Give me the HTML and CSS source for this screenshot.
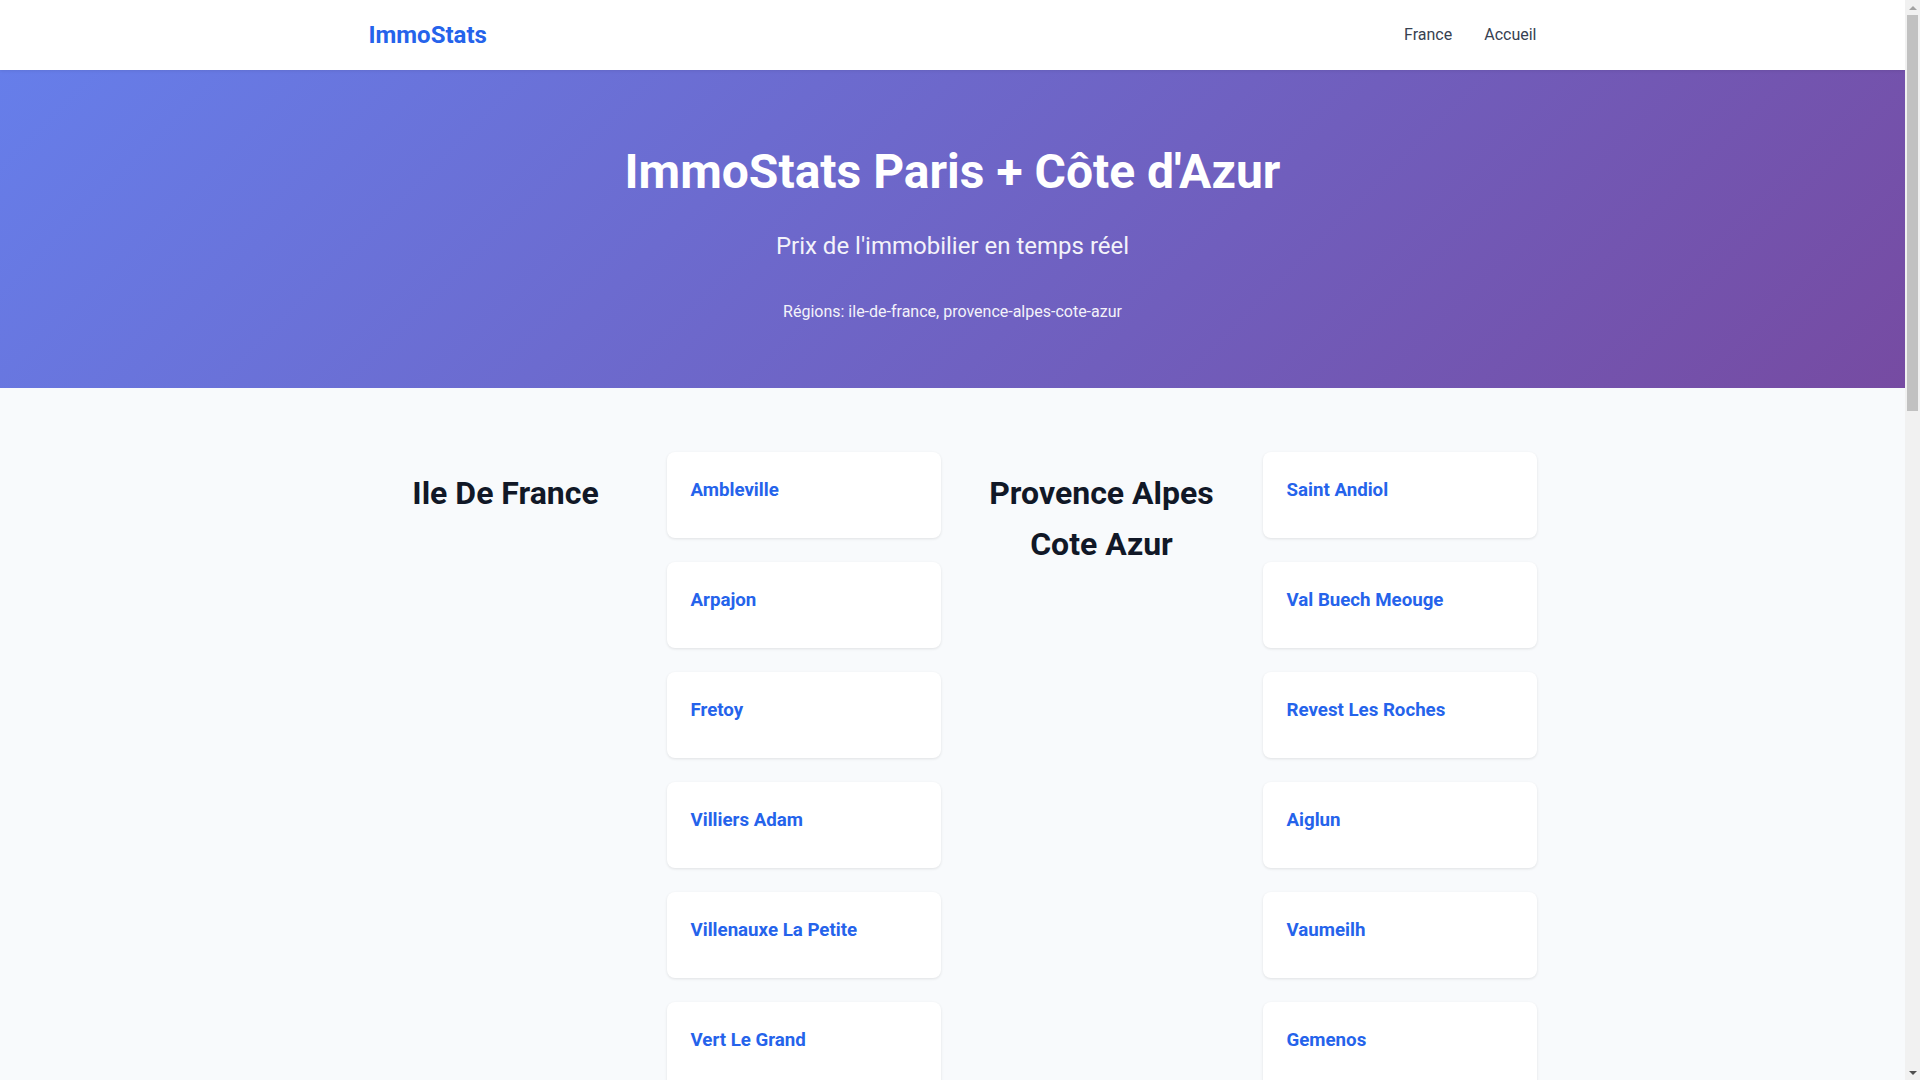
FILE: index.html
```html
<!DOCTYPE html>
<html lang="fr">
<head>
  <meta charset="UTF-8">
  <meta name="viewport" content="width=device-width, initial-scale=1.0">
  <title>ImmoStats Paris + Côte d'Azur</title>
  <link rel="stylesheet" href="styles.css">
</head>
<body>
  <header class="navbar">
    <div class="container nav-inner">
      <a class="logo" href="#">ImmoStats</a>
      <nav class="nav-links">
        <a href="#">France</a>
        <a href="#">Accueil</a>
      </nav>
    </div>
  </header>

  <section class="hero">
    <div class="container">
      <h1>ImmoStats Paris + Côte d'Azur</h1>
      <p class="subtitle">Prix de l'immobilier en temps réel</p>
      <p class="regions-line">Régions: ile-de-france, provence-alpes-cote-azur</p>
    </div>
  </section>

  <main class="cities">
    <div class="container regions">
      <!-- une région = un titre + une colonne de villes -->
      <div class="region">
        <h2>Ile De France</h2>
        <div class="city-list">
          <a class="city-card" href="#"><h3>Ambleville</h3></a>
          <a class="city-card" href="#"><h3>Arpajon</h3></a>
          <a class="city-card" href="#"><h3>Fretoy</h3></a>
          <a class="city-card" href="#"><h3>Villiers Adam</h3></a>
          <a class="city-card" href="#"><h3>Villenauxe La Petite</h3></a>
          <a class="city-card" href="#"><h3>Vert Le Grand</h3></a>
          <a class="city-card" href="#"><h3>Chevreuse</h3></a>
          <a class="city-card" href="#"><h3>Milly La Foret</h3></a>
          <a class="city-card" href="#"><h3>Houdan</h3></a>
          <a class="city-card" href="#"><h3>Provins</h3></a>
          <a class="city-card" href="#"><h3>Rambouillet</h3></a>
          <a class="city-card" href="#"><h3>Etampes</h3></a>
          <a class="city-card" href="#"><h3>Dourdan</h3></a>
          <a class="city-card" href="#"><h3>Barbizon</h3></a>
          <a class="city-card" href="#"><h3>Nemours</h3></a>
          <a class="city-card" href="#"><h3>Magny En Vexin</h3></a>
          <a class="city-card" href="#"><h3>Enghien Les Bains</h3></a>
          <a class="city-card" href="#"><h3>Saint Germain En Laye</h3></a>
          <a class="city-card" href="#"><h3>Montfort L Amaury</h3></a>
          <a class="city-card" href="#"><h3>Houilles</h3></a>
        </div>
      </div>
      <div class="region">
        <h2>Provence Alpes Cote Azur</h2>
        <div class="city-list">
          <a class="city-card" href="#"><h3>Saint Andiol</h3></a>
          <a class="city-card" href="#"><h3>Val Buech Meouge</h3></a>
          <a class="city-card" href="#"><h3>Revest Les Roches</h3></a>
          <a class="city-card" href="#"><h3>Aiglun</h3></a>
          <a class="city-card" href="#"><h3>Vaumeilh</h3></a>
          <a class="city-card" href="#"><h3>Gemenos</h3></a>
          <a class="city-card" href="#"><h3>Cassis</h3></a>
          <a class="city-card" href="#"><h3>Gordes</h3></a>
          <a class="city-card" href="#"><h3>Lourmarin</h3></a>
          <a class="city-card" href="#"><h3>Menton</h3></a>
          <a class="city-card" href="#"><h3>Grasse</h3></a>
          <a class="city-card" href="#"><h3>Sisteron</h3></a>
          <a class="city-card" href="#"><h3>Briancon</h3></a>
          <a class="city-card" href="#"><h3>Cotignac</h3></a>
          <a class="city-card" href="#"><h3>Bandol</h3></a>
          <a class="city-card" href="#"><h3>Ramatuelle</h3></a>
          <a class="city-card" href="#"><h3>Eze</h3></a>
          <a class="city-card" href="#"><h3>Bormes Les Mimosas</h3></a>
          <a class="city-card" href="#"><h3>Saint Paul De Vence</h3></a>
          <a class="city-card" href="#"><h3>Moustiers Sainte Marie</h3></a>
        </div>
      </div>
    </div>
  </main>

  <!-- barre de défilement dessinée (le navigateur headless la masque) -->
  <div class="scrollbar" aria-hidden="true">
    <span class="sb-arrow sb-up"></span>
    <span class="sb-thumb"></span>
    <span class="sb-space"></span>
    <span class="sb-arrow sb-down"></span>
  </div>
</body>
</html>
```

FILE: styles.css
```css
* {
  box-sizing: border-box;
}
html, body {
  margin: 0;
  padding: 0;
}
body {
  font-family: Roboto, "Liberation Sans", Arial, sans-serif;
  line-height: 1.6;
  color: #1f2937;
  background-color: #f8fafc;
  margin-right: 15px;
}
a {
  text-decoration: none;
}
.container {
  max-width: 1200px;
  margin: 0 auto;
  padding: 0 16px;
}

/* barre du haut */
.navbar {
  background-color: #fff;
  padding: 16px 0;
  box-shadow: 0 1px 3px rgba(0, 0, 0, 0.08);
  position: relative;
  z-index: 1;
}
.nav-inner {
  display: flex;
  align-items: center;
  justify-content: space-between;
}
.logo {
  font-size: 24px;
  font-weight: 700;
  color: #2563eb;
}
.nav-links {
  display: flex;
  gap: 32px;
}
.nav-links a {
  color: #374151;
  font-size: 16px;
}

/* bandeau dégradé */
.hero {
  background: linear-gradient(135deg, #667eea 0%, #764ba2 100%);
  color: #fff;
  text-align: center;
  padding: 64px 0;
}
.hero h1 {
  margin: 0 0 16px;
  font-size: 48px;
  font-weight: 700;
}
.subtitle {
  margin: 0 0 33px;
  font-size: 24px;
  opacity: 0.92;
}
.regions-line {
  margin: 0;
  font-size: 16px;
  opacity: 0.92;
}

/* liste des villes */
.cities {
  padding: 64px 0;
}
.regions {
  display: grid;
  grid-template-columns: 1fr 1fr;
  gap: 24px;
}
.region {
  display: grid;
  grid-template-columns: 1fr 1fr;
  gap: 24px;
  align-items: start;
}
.region h2 {
  margin: 16px 0 0;
  font-size: 32px;
  font-weight: 700;
  color: #111827;
  text-align: center;
}
.city-list {
  display: flex;
  flex-direction: column;
  gap: 24px;
}
.city-card {
  display: block;
  background-color: #fff;
  border-radius: 8px;
  padding: 24px;
  box-shadow: 0 1px 3px rgba(0, 0, 0, 0.1);
}
.city-card h3 {
  margin: 0 0 8px;
  font-size: 18.7px;
  font-weight: 700;
  color: #2563eb;
}

/* scrollbar */
.scrollbar {
  position: fixed;
  top: 0;
  right: 0;
  width: 15px;
  height: 100vh;
  background-color: #f1f1f1;
  display: flex;
  flex-direction: column;
  z-index: 10;
}
.sb-arrow {
  height: 15px;
  display: flex;
  align-items: center;
  justify-content: center;
}
.sb-arrow::before {
  content: '';
  border-left: 4px solid transparent;
  border-right: 4px solid transparent;
}
.sb-up::before {
  border-bottom: 4px solid #a3a3a3;
}
.sb-down::before {
  border-top: 4px solid #505050;
}
.sb-thumb {
  height: 396px;
  margin: 0 2px;
  background-color: #c1c1c1;
}
.sb-space {
  flex: 1;
}
```
